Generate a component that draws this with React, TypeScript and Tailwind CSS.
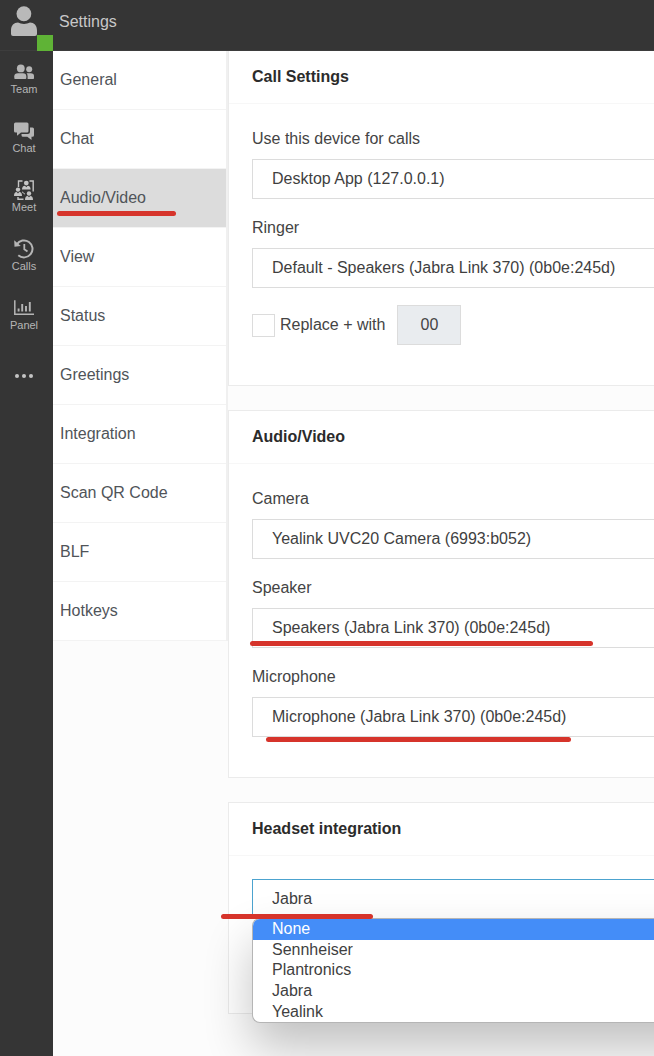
import { useState } from 'react';
import type { ReactNode } from 'react';
import clsx from 'clsx';

function UserIcon() {
  return (
    <svg viewBox="0 0 26 30" className="h-[30px] w-[26px]" fill="#b9b9b9" aria-hidden="true">
      <ellipse cx="12.9" cy="7.8" rx="7.4" ry="7.5" />
      <path d="M0 28V24.500C0 19.500 3 16.600 7 16.600C8.700 17.300 10.700 17.900 13 17.900S17.300 17.300 19 16.600C23 16.600 26 19.500 26 24.500V28Q26 30 24 30H2Q0 30 0 28Z" />
    </svg>
  );
}

function TeamIcon() {
  return (
    <svg viewBox="0 0 20 20" className="size-5" fill="#b5b5b5" aria-hidden="true">
      <circle cx="6.800" cy="6.400" r="3.900" />
      <path d="M0.300 16V14.300Q0.300 11.300 4 11.300H9Q12.300 11.300 12.300 14.300V16Q12.300 17 11.500 17H1Q0.300 17 0.300 16Z" />
      <circle cx="15.200" cy="7.200" r="3" />
      <path d="M13.600 17V14.300Q13.600 12.500 12.600 11.300H16.800Q20 11.300 20 14V16.200Q20 17 19.200 17Z" />
    </svg>
  );
}

function ChatIcon() {
  return (
    <svg viewBox="0 0 20 20" className="size-5" fill="#b5b5b5" aria-hidden="true">
      <path d="M1.500 1.500H13Q14.500 1.500 14.500 3V10Q14.500 11.500 13 11.500H7L3 14.700V11.500H1.500Q0 11.500 0 10V3Q0 1.500 1.500 1.500Z" />
      <path d="M16 6.500H18.500Q20 6.500 20 8V14.200Q20 15.700 18.500 15.700H17.500V19L13.300 15.700H9Q7.500 15.700 7.500 14.200V13H13.500Q16 13 16 10.500Z" />
    </svg>
  );
}

function MeetIcon() {
  return (
    <svg viewBox="0 0 20 20" className="size-5" fill="#c4c4c4" aria-hidden="true">
      <path d="M4.500 7V1H8.500M15.500 1H19.200V11.500M4 17V19.200H9.500" fill="none" stroke="#c4c4c4" strokeWidth="1.400" />
      <circle cx="12.300" cy="3.100" r="2.400" />
      <path d="M8 9.600Q8 5.900 11 5.700L12.300 7.200L13.600 5.700Q16.600 5.900 16.600 9.600Z" />
      <circle cx="4" cy="9.600" r="2.200" />
      <path d="M0 15.900Q0 12.300 2.700 12.100L4 13.500L5.300 12.100Q8 12.300 8 15.900Z" />
      <circle cx="15" cy="13.500" r="2.200" />
      <path d="M11 19.900Q11 16.100 13.700 15.900L15 17.300L16.300 15.900Q19 16.100 19 19.900Z" />
      <path d="M8 11.800L11 14.200" stroke="#c4c4c4" />
    </svg>
  );
}

function CallsIcon() {
  return (
    <svg viewBox="0 0 20 20" className="size-5" fill="none" stroke="#b5b5b5" strokeWidth="2" aria-hidden="true">
      <path d="M2.800 5.400A8.500 8.500 0 1 1 4.300 16.200" />
      <path d="M10.300 5V10.300L13.500 12.600" strokeWidth="1.800" />
      <path d="M0.200 1.200L6.800 6.900L0.500 7.800Z" fill="#b5b5b5" stroke="none" />
    </svg>
  );
}

function PanelIcon() {
  return (
    <svg viewBox="0 0 20 20" className="size-5" fill="none" stroke="#b5b5b5" aria-hidden="true">
      <path d="M0.800 2.200V16.200H20" strokeWidth="1.500" />
      <path d="M4.600 13.500V10.500M8.200 13.500V6M12 13.500V8M15.800 13.500V4" strokeWidth="1.900" />
    </svg>
  );
}

const navItems = [
  { label: 'Team', icon: <TeamIcon /> },
  { label: 'Chat', icon: <ChatIcon /> },
  { label: 'Meet', icon: <MeetIcon /> },
  { label: 'Calls', icon: <CallsIcon /> },
  { label: 'Panel', icon: <PanelIcon /> },
];

const menuItems = [
  'General',
  'Chat',
  'Audio/Video',
  'View',
  'Status',
  'Greetings',
  'Integration',
  'Scan QR Code',
  'BLF',
  'Hotkeys',
];

const headsets = ['None', 'Sennheiser', 'Plantronics', 'Jabra', 'Yealink'];

// Red marker line drawn over the page
function Marker({ className }: { className: string }) {
  return <span className={clsx('pointer-events-none absolute z-20 h-[5px] rounded-full bg-[#d6342b]', className)} />;
}

function Card({ title, className, children }: { title: string; className?: string; children: ReactNode }) {
  return (
    <section className={clsx('border border-r-0 border-[#ebebeb] bg-white', className)}>
      <h2 className="flex h-[53px] items-center border-b border-[#f7f7f7] pl-[23px] text-base font-bold text-[#2b2b2b]">
        {title}
      </h2>
      <div className="flex flex-col gap-[17px] pt-[23px] pb-10 pl-[23px]">{children}</div>
    </section>
  );
}

interface FieldProps {
  id: string;
  label: string;
  value: string;
  marker?: string;
}

function Field({ id, label, value, marker }: FieldProps) {
  return (
    <div className="relative flex flex-col gap-2">
      <label htmlFor={id} className="leading-6">
        {label}
      </label>
      <select
        id={id}
        className="h-10 w-full appearance-none border border-r-0 border-[#dcdcdc] bg-white pl-[19px] text-[#3f3f3f] outline-none"
      >
        <option>{value}</option>
      </select>
      {marker && <Marker className={marker} />}
    </div>
  );
}

export default function App() {
  const [active, setActive] = useState('Audio/Video');
  const [headset, setHeadset] = useState('Jabra');
  const [open, setOpen] = useState(true);
  const [hovered, setHovered] = useState('None');

  return (
    <div className="flex min-h-screen flex-col overflow-hidden bg-[#fcfcfc] font-['Liberation_Sans',Arial,sans-serif] text-base text-[#444]">
      <header className="flex h-[51px] border-b border-[#3d3d3d] bg-[#353535]">
        <div className="relative w-[53px] shrink-0 pt-1.5 pl-[11px]">
          <UserIcon />
          <span className="absolute right-0 -bottom-px z-10 size-4 bg-[#5fb336]" />
        </div>
        <h1 className="pt-[10px] pl-1.5 leading-6 text-[#c8c8c8]">Settings</h1>
      </header>

      <div className="flex flex-1">
        <nav className="w-[53px] shrink-0 bg-[#353535]">
          {navItems.map((item) => (
            <button
              key={item.label}
              type="button"
              className="flex h-[59px] w-full flex-col items-center pt-[11px] pr-[5px] text-[11px] leading-[14px] text-[#b5b5b5]"
            >
              {item.icon}
              {item.label}
            </button>
          ))}
          <button type="button" aria-label="More" className="flex h-[59px] w-full items-center justify-center gap-[3px] pr-[5px]">
            <span className="size-1 rounded-full bg-[#c4c4c4]" />
            <span className="size-1 rounded-full bg-[#c4c4c4]" />
            <span className="size-1 rounded-full bg-[#c4c4c4]" />
          </button>
        </nav>

        <aside className="w-[175px] shrink-0">
          <ul className="border-r-2 border-[#f0f0f0] bg-white">
            {menuItems.map((item) => (
              <li key={item} className="relative border-b border-[#f3f3f3]">
                <button
                  type="button"
                  onClick={() => setActive(item)}
                  className={clsx(
                    'h-[58px] w-full pl-[7px] text-left text-[#505459]',
                    active === item && 'bg-[#dcdcdc]',
                  )}
                >
                  {item}
                </button>
                {item === 'Audio/Video' && <Marker className="bottom-[11px] left-1 w-[119px]" />}
              </li>
            ))}
          </ul>
        </aside>

        <main className="flex min-w-0 flex-1 flex-col gap-6 pb-[42px]">
          <Card title="Call Settings" className="border-t-0">
            <Field id="device" label="Use this device for calls" value="Desktop App (127.0.0.1)" />
            <Field id="ringer" label="Ringer" value="Default - Speakers (Jabra Link 370) (0b0e:245d)" />
            <div className="flex h-10 items-center">
              <input
                id="replace"
                type="checkbox"
                className="size-[23px] appearance-none border border-[#dcdcdc] bg-white checked:bg-[#448df8]"
              />
              <label htmlFor="replace" className="pl-[5px]">
                Replace + with
              </label>
              <input
                aria-label="Replacement prefix"
                disabled
                defaultValue="00"
                className="ml-3 h-10 w-16 border border-[#dcdcdc] bg-[#e9ecef] text-center text-[#444]"
              />
            </div>
          </Card>

          <Card title="Audio/Video">
            <Field id="camera" label="Camera" value="Yealink UVC20 Camera (6993:b052)" />
            <Field
              id="speaker"
              label="Speaker"
              value="Speakers (Jabra Link 370) (0b0e:245d)"
              marker="bottom-[2px] -left-[2px] w-[343px]"
            />
            <Field
              id="microphone"
              label="Microphone"
              value="Microphone (Jabra Link 370) (0b0e:245d)"
              marker="-bottom-[5px] left-[14px] w-[305px]"
            />
          </Card>

          <Card title="Headset integration" className="min-h-[212px]">
            <div className="relative">
              <select
                aria-label="Headset integration"
                value={headset}
                onChange={(e) => setHeadset(e.target.value)}
                onMouseDown={(e) => {
                  e.preventDefault();
                  setOpen(!open);
                }}
                className="h-10 w-full appearance-none border border-r-0 border-[#4ca3cf] bg-white pl-[19px] text-[#3f3f3f] outline-none"
              >
                {headsets.map((name) => (
                  <option key={name}>{name}</option>
                ))}
              </select>
              {open && (
                <div
                  role="listbox"
                  aria-label="Headsets"
                  className="absolute top-[39px] -right-16 left-0 z-10 flex h-[105px] flex-col overflow-hidden rounded-l-lg border border-r-0 border-[#b5b5b5] bg-white shadow-[0_24px_48px_rgba(0,0,0,0.24)]"
                >
                  {headsets.map((name) => (
                    <button
                      key={name}
                      type="button"
                      role="option"
                      aria-selected={name === headset}
                      onMouseEnter={() => setHovered(name)}
                      onClick={() => {
                        setHeadset(name);
                        setOpen(false);
                      }}
                      className={clsx(
                        'flex-1 pl-[19px] text-left leading-5',
                        hovered === name ? 'bg-[#448df8] text-white' : 'text-[#3f3f3f]',
                      )}
                    >
                      {name}
                    </button>
                  ))}
                </div>
              )}
              <Marker className="top-[35px] -left-[31px] w-[152px]" />
            </div>
          </Card>
        </main>
      </div>
    </div>
  );
}
